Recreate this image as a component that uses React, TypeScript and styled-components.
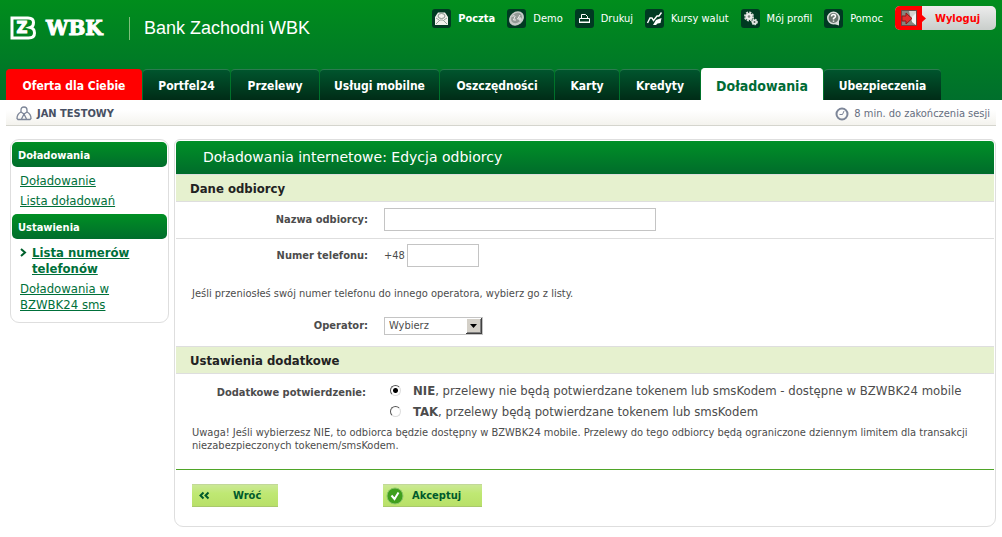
import React from 'react';
import styled, { createGlobalStyle, css } from 'styled-components';

const tahoma = `"DejaVu Sans Condensed", "DejaVu Sans", Tahoma, sans-serif`;
const verdana = `"DejaVu Sans", Verdana, sans-serif`;

const GlobalStyle = createGlobalStyle`
  *, *::before, *::after { box-sizing: border-box; }
  body {
    margin: 0;
    background: #fff;
    color: #4c4c4c;
    font-family: ${tahoma};
    font-size: 11px;
    line-height: 13px;
  }
`;

const Header = styled.header`
  display: flex;
  flex-direction: column;
  justify-content: space-between;
  height: 100px;
  padding: 0 6px;
  background: linear-gradient(#008d1c, #006f2c);
`;

const TopBar = styled.div`
  display: flex;
  justify-content: space-between;
  padding-top: 6px;
`;

const Brand = styled.div`
  display: flex;
  align-items: center;
  height: 44px;
  padding-left: 4px;
  color: #fff;
`;

const BrandMark = styled.strong`
  width: 71px;
  margin-left: 10px;
  font: bold 20px/20px "DejaVu Serif", serif;
  -webkit-text-stroke: 1px #fff;
`;

const BrandName = styled.span`
  padding-left: 14px;
  margin-left: 12px;
  border-left: 1px solid #7fc07c;
  font: 18px/23px "Liberation Sans", Arial, sans-serif;
`;

const Tools = styled.nav`
  display: flex;
  align-items: center;
  gap: 12px;
  height: 24px;
`;

const ToolLink = styled.a<{ $strong?: boolean }>`
  display: flex;
  align-items: center;
  gap: 7px;
  color: #fff;
  font-weight: ${p => (p.$strong ? 'bold' : 'normal')};
  text-decoration: none;
  white-space: nowrap;
`;

const Logout = styled.button`
  display: flex;
  align-items: center;
  width: 101px;
  height: 24px;
  padding: 0;
  border: 0;
  border-radius: 5px;
  overflow: hidden;
  background: linear-gradient(#ececec, #c9cecb);
  color: #f00;
  font: bold 11px/13px ${tahoma};
  gap: 9px;
`;

const Tabs = styled.nav`
  display: flex;
  align-items: flex-end;
  gap: 1px;
`;

const Tab = styled.a<{ $width: number; $kind?: 'offer' | 'active' }>`
  width: ${p => p.$width}px;
  height: 31px;
  padding-top: 9px;
  border-top: 1px solid #2c7a50;
  border-radius: 4px 4px 0 0;
  background: linear-gradient(#00552d, #002c17);
  color: #fff;
  font-size: 12px;
  font-weight: bold;
  line-height: 15px;
  text-align: center;
  text-decoration: none;
  white-space: nowrap;
  ${p => p.$kind === 'offer' && css`
    border-top-color: #f00;
    background: #f00;
  `}
  ${p => p.$kind === 'active' && css`
    height: 32px;
    padding-top: 10px;
    border-top-color: #fff;
    background: #fff;
    color: #006b35;
    font-size: 14px;
  `}
`;

const StatusBar = styled.div`
  display: flex;
  justify-content: space-between;
  align-items: center;
  height: 26px;
  margin: 0 6px;
  padding: 0 6px 0 10px;
  border-bottom: 1px solid #d5d5ce;
  background: linear-gradient(#fff 40%, #f4f3ee);
`;

const Status = styled.span<{ $strong?: boolean }>`
  display: flex;
  align-items: center;
  gap: 5px;
  padding-top: 2px;
  color: ${p => (p.$strong ? '#475063' : '#666e80')};
  font-weight: ${p => (p.$strong ? 'bold' : 'normal')};
`;

const Layout = styled.div`
  display: flex;
  align-items: flex-start;
  gap: 5px;
  padding: 13px 6px 9px 10px;
`;

const Sidebar = styled.aside`
  flex: 0 0 159px;
  padding: 2px 1px 7px;
  border: 1px solid #dedede;
  border-radius: 9px;
`;

const SideHeading = styled.h2`
  margin: 0;
  padding: 7px 6px 4px;
  border-radius: 5px;
  background: linear-gradient(#008f24, #006d2c);
  color: #fff;
  font: bold 11px/14px ${tahoma};
`;

const SideList = styled.ul<{ $loose?: boolean }>`
  margin: 0;
  padding: ${p => (p.$loose ? '4px 8px 3px' : '4px 8px 0')};
  list-style: none;
`;

const SideItem = styled.li<{ $current?: boolean }>`
  display: flex;
  align-items: flex-start;
  gap: 5px;
  padding: 2px 0;
  line-height: 16px;
  font-size: 13px;
  font-weight: ${p => (p.$current ? 'bold' : 'normal')};
  svg { flex: none; margin-top: 3px; }
`;

const SideLink = styled.a`
  color: #00703a;
`;

const Panel = styled.main`
  flex: 1;
  min-width: 0;
  padding: 1px 1px 19px;
  border: 1px solid #dedede;
  border-radius: 6px 6px 9px 9px;
`;

const PanelTitle = styled.h1`
  margin: 0;
  padding: 8px 27px;
  border-radius: 4px 4px 0 0;
  background: linear-gradient(#009027, #006c2b);
  color: #fff;
  font: 14px/17px ${verdana};
`;

const SectionTitle = styled.h2`
  margin: 0;
  padding: 5px 14px 4px;
  border: 1px solid #dedede;
  border-width: 1px 0;
  background: #e6f1cf;
  color: #222;
  font: bold 13px/17px ${tahoma};
`;

const Row = styled.div<{ $ruled?: boolean; $height: number }>`
  display: grid;
  grid-template-columns: 192px 1fr;
  column-gap: 16px;
  align-items: center;
  min-height: ${p => p.$height}px;
  padding-bottom: 2px;
  border-bottom: ${p => (p.$ruled ? '1px solid #dedede' : '0')};
`;

const Label = styled.label`
  font-weight: bold;
  text-align: right;
`;

const Field = styled.div`
  display: flex;
  align-items: center;
  gap: 2px;
`;

const TextInput = styled.input<{ $width: number }>`
  width: ${p => p.$width}px;
  height: 23px;
  padding: 0 4px;
  border: 1px solid #c4c4c4;
  background: #fff;
  font: 11px/13px ${tahoma};
`;

const SelectFrame = styled.span`
  position: relative;
  display: block;
  width: 99px;
  height: 18px;
`;

const SelectBox = styled.select`
  width: 100%;
  height: 100%;
  padding: 0 20px 0 4px;
  border: 1px solid #c4c4c4;
  border-radius: 0;
  background: #fff;
  color: #4c4c4c;
  font: 11px/13px ${tahoma};
  appearance: none;
`;

const SelectArrow = styled.svg`
  position: absolute;
  top: 1px;
  right: 1px;
  pointer-events: none;
`;

const Hint = styled.p<{ $spaced?: boolean }>`
  margin: 0;
  padding: ${p => (p.$spaced ? '14px 16px 7px' : '0 16px')};
`;

const Choices = styled.fieldset`
  display: grid;
  grid-template-columns: 190px 1fr;
  column-gap: 24px;
  margin: 0;
  padding: 6px 0 4px;
  border: 0;
`;

const ChoicesLabel = styled.span`
  padding-top: 6px;
  font-weight: bold;
  text-align: right;
`;

const Choice = styled.label`
  display: flex;
  align-items: center;
  gap: 12px;
  height: 21px;
  font-size: 13px;
`;

const Radio = styled.input`
  appearance: none;
  flex: none;
  width: 11px;
  height: 11px;
  margin: 0;
  border: 1px solid;
  border-color: #555 #ddd #ddd #555;
  border-radius: 50%;
  background: #fff;
  &:checked { background: radial-gradient(circle, #000 2px, #fff 3px); }
`;

const Actions = styled.div`
  display: grid;
  grid-template-columns: 191px 1fr;
  margin-top: 17px;
  padding: 14px 0 0 16px;
  border-top: 1px solid #4fa528;
`;

const ActionButton = styled.button<{ $width: number; $gap: number }>`
  display: flex;
  align-items: center;
  gap: ${p => p.$gap}px;
  width: ${p => p.$width}px;
  height: 23px;
  padding: 0 3px;
  border: 0;
  border-top: 1px solid #c2d898;
  border-bottom: 1px solid #a9c96c;
  background: linear-gradient(#cbe895, #bfe873 40%, #b9e069);
  color: #005a2c;
  font: bold 11px/13px ${tahoma};
`;

function Tile({ children }: { children: React.ReactNode }) {
  return (
    <svg width="19" height="19" viewBox="0 0 19 19" aria-hidden="true">
      <rect width="19" height="19" rx="3" fill="#003a22" />
      {children}
    </svg>
  );
}

const MailIcon = () => (
  <Tile>
    <path d="M3 8 6 3.500h7L16 8v8H3z" fill="#f2f2ee" />
    <ellipse cx="9.500" cy="7" rx="3.500" ry="2.500" fill="none" stroke="#85958c" />
    <path d="m4 15 4-4h3l4 4M4 9l3 2m8-2-3 2" fill="none" stroke="#9aa69f" />
  </Tile>
);

const CoinIcon = () => (
  <Tile>
    <ellipse cx="9.500" cy="9.500" rx="8" ry="6.500" transform="rotate(-40 9.500 9.500)" fill="#c6cac8" />
    <ellipse cx="9.500" cy="9" rx="6" ry="4.700" transform="rotate(-40 9.500 9)" fill="#929a96" />
    <path d="M5.500 7.500q2-2 2.500 0L6.500 11H9m4-5-2.500 4h4M13 8v4" fill="none" stroke="#eee" />
  </Tile>
);

const PrinterIcon = () => (
  <Tile>
    <path d="M6.500 9V5.500h4l2 2V9M4.500 9.500h10v4h-10z" fill="none" stroke="#fff" />
    <path d="M4 12.500h11v1.500H4z" fill="#fff" />
  </Tile>
);

const RatesIcon = () => (
  <Tile>
    <path d="m2.500 14 2.500-5h2l1.500 2.500L12 7h2l2.500-3.500" fill="none" stroke="#fff" strokeWidth="1.400" />
    <path d="m11 11 5.500-2-1 5-3 .500-1.500 1.500H8z" fill="#fff" />
  </Tile>
);

const GearsIcon = () => (
  <Tile>
    <circle cx="8" cy="7.500" r="3.500" fill="#eee" />
    <circle cx="8" cy="7.500" r="4" fill="none" stroke="#d9dedb" strokeWidth="2" strokeDasharray="2 1.100" />
    <circle cx="8" cy="7.500" r="1.300" fill="#7d8a83" />
    <circle cx="13.500" cy="13" r="2.600" fill="#eee" stroke="#d9dedb" strokeWidth="1.500" strokeDasharray="1.500 1" />
    <circle cx="13.500" cy="13" r="1" fill="#55655c" />
  </Tile>
);

const HelpIcon = () => (
  <Tile>
    <path d="M15 11v5.500L10 15z" fill="#d9dedb" />
    <circle cx="9.500" cy="9" r="5.700" fill="#66756d" stroke="#d9dedb" strokeWidth="1.600" />
    <path d="M7.500 7.500q0-2 2-2t2 1.700q0 1-2 2.300v1m0 1v1.300" fill="none" stroke="#fff" strokeWidth="1.500" />
  </Tile>
);

const LogoutIcon = () => (
  <svg width="31" height="24" viewBox="0 0 31 24" aria-hidden="true">
    <path d="M0 0h27v9l4 3.500-4 3.500v8H0z" fill="#f00" />
    <rect x="6.500" y="4.500" width="15" height="15" fill="#85867f" stroke="#6a4a45" />
    <path d="M14 5h7v14l-5-5z" fill="#d4d4d0" />
    <path d="m21 7-4 4v5l4 3z" fill="#f4f4f4" />
    <path d="M7 10h4V7l6 5.500-6 5.500v-3H7z" fill="#e03030" stroke="#8f1717" />
  </svg>
);

const LogoIcon = () => (
  <svg width="26" height="24" viewBox="0 0 26 24" aria-hidden="true">
    <path d="M2 2h16q5.500 0 5.500 4.500 0 4-3 5 4 1 4 5.500 0 5-6 5H2z" fill="none" stroke="#fff" strokeWidth="3" />
    <text x="12" y="17" textAnchor="middle" fill="#fff" stroke="#fff" fontFamily="DejaVu Sans" fontWeight="bold" fontSize="15">Z</text>
  </svg>
);

const UserIcon = () => (
  <svg width="16" height="15" viewBox="0 0 16 15" fill="none" stroke="#7d8698" strokeWidth="1.300" aria-hidden="true">
    <path d="M5 6.500V4q0-3 3-3t3 3v2.500" />
    <path d="M5 6Q1 8 1 12.500l1 1h12l1-1Q15 8 11 6M5 6l3 2 3-2M8 8l-2.500 5M8 8l2.500 5" />
  </svg>
);

const ClockIcon = () => (
  <svg width="14" height="14" viewBox="0 0 14 14" fill="none" stroke="#7d8698" aria-hidden="true">
    <circle cx="7" cy="7" r="5.500" strokeWidth="2" />
    <path d="M9 4 7.500 7.500H4.500" />
  </svg>
);

const tools = [
  { text: 'Poczta', icon: <MailIcon />, strong: true },
  { text: 'Demo', icon: <CoinIcon /> },
  { text: 'Drukuj', icon: <PrinterIcon /> },
  { text: 'Kursy walut', icon: <RatesIcon /> },
  { text: 'Mój profil', icon: <GearsIcon /> },
  { text: 'Pomoc', icon: <HelpIcon /> },
];

const tabs: { text: string; width: number; kind?: 'offer' | 'active' }[] = [
  { text: 'Oferta dla Ciebie', width: 136, kind: 'offer' },
  { text: 'Portfel24', width: 87 },
  { text: 'Przelewy', width: 88 },
  { text: 'Usługi mobilne', width: 119 },
  { text: 'Oszczędności', width: 114 },
  { text: 'Karty', width: 64 },
  { text: 'Kredyty', width: 80 },
  { text: 'Doładowania', width: 122, kind: 'active' },
  { text: 'Ubezpieczenia', width: 117 },
];

export default function App() {
  return (
    <>
      <GlobalStyle />
      <Header>
        <TopBar>
          <Brand>
            <LogoIcon />
            <BrandMark>WBK</BrandMark>
            <BrandName>Bank Zachodni WBK</BrandName>
          </Brand>
          <Tools>
            {tools.map(t => (
              <ToolLink key={t.text} href="#" $strong={t.strong}>
                {t.icon}
                {t.text}
              </ToolLink>
            ))}
            <Logout type="button">
              <LogoutIcon />
              Wyloguj
            </Logout>
          </Tools>
        </TopBar>
        <Tabs>
          {tabs.map(t => (
            <Tab key={t.text} href="#" $width={t.width} $kind={t.kind}>{t.text}</Tab>
          ))}
        </Tabs>
      </Header>
      <StatusBar>
        <Status $strong><UserIcon />JAN TESTOWY</Status>
        <Status><ClockIcon />8 min. do zakończenia sesji</Status>
      </StatusBar>
      <Layout>
        <Sidebar>
          <SideHeading>Doładowania</SideHeading>
          <SideList $loose>
            <SideItem><SideLink href="#">Doładowanie</SideLink></SideItem>
            <SideItem><SideLink href="#">Lista doładowań</SideLink></SideItem>
          </SideList>
          <SideHeading>Ustawienia</SideHeading>
          <SideList>
            <SideItem $current>
              <svg width="7" height="9" viewBox="0 0 7 9" aria-hidden="true">
                <path d="m1 1 4 3.500L1 8" fill="none" stroke="#00602c" strokeWidth="2" />
              </svg>
              <SideLink href="#">Lista numerów telefonów</SideLink>
            </SideItem>
            <SideItem><SideLink href="#">Doładowania w BZWBK24 sms</SideLink></SideItem>
          </SideList>
        </Sidebar>
        <Panel>
          <PanelTitle>Doładowania internetowe: Edycja odbiorcy</PanelTitle>
          <SectionTitle>Dane odbiorcy</SectionTitle>
          <Row $height={37} $ruled>
            <Label htmlFor="name">Nazwa odbiorcy:</Label>
            <Field><TextInput id="name" type="text" $width={272} /></Field>
          </Row>
          <Row $height={34}>
            <Label htmlFor="phone">Numer telefonu:</Label>
            <Field>+48<TextInput id="phone" type="tel" $width={72} /></Field>
          </Row>
          <Hint $spaced>Jeśli przeniosłeś swój numer telefonu do innego operatora, wybierz go z listy.</Hint>
          <Row $height={39}>
            <Label htmlFor="operator">Operator:</Label>
            <SelectFrame>
              <SelectBox id="operator"><option>Wybierz</option></SelectBox>
              <SelectArrow width="16" height="16" viewBox="0 0 16 16" aria-hidden="true">
                <path d="M0 0h16v16H0z" fill="#404040" />
                <path d="M0 0h15v15H0z" fill="#fff" />
                <path d="M1 1h14v14H1z" fill="#808080" />
                <path d="M1 1h13v13H1z" fill="#d4d0c8" />
                <path d="M4 6h7l-3.500 4z" fill="#000" />
              </SelectArrow>
            </SelectFrame>
          </Row>
          <SectionTitle>Ustawienia dodatkowe</SectionTitle>
          <Choices aria-labelledby="confirmation">
            <ChoicesLabel id="confirmation">Dodatkowe potwierdzenie:</ChoicesLabel>
            <div>
              <Choice>
                <Radio type="radio" name="confirm" defaultChecked />
                <span><b>NIE</b>, przelewy nie będą potwierdzane tokenem lub smsKodem - dostępne w BZWBK24 mobile</span>
              </Choice>
              <Choice>
                <Radio type="radio" name="confirm" />
                <span><b>TAK</b>, przelewy będą potwierdzane tokenem lub smsKodem</span>
              </Choice>
            </div>
          </Choices>
          <Hint>
            Uwaga! Jeśli wybierzesz NIE, to odbiorca będzie dostępny w BZWBK24 mobile. Przelewy do tego odbiorcy będą ograniczone dziennym limitem dla transakcji niezabezpieczonych tokenem/smsKodem.
          </Hint>
          <Actions>
            <ActionButton type="button" $width={86} $gap={21}>
              <svg width="17" height="9" viewBox="0 0 17 9" aria-hidden="true">
                <path d="M8.500 1.500 5.500 4.500l3 3M13.500 1.500l-3 3 3 3" fill="none" stroke="#005a2c" strokeWidth="2" />
              </svg>
              Wróć
            </ActionButton>
            <ActionButton type="submit" $width={99} $gap={8}>
              <svg width="18" height="18" viewBox="0 0 18 18" aria-hidden="true">
                <circle cx="9" cy="9" r="8" fill="#3f9f1d" stroke="#8cc56a" />
                <path d="m5.500 8.500 3 3.500 4-6.500" fill="none" stroke="#fff" strokeWidth="2" />
              </svg>
              Akceptuj
            </ActionButton>
          </Actions>
        </Panel>
      </Layout>
    </>
  );
}
